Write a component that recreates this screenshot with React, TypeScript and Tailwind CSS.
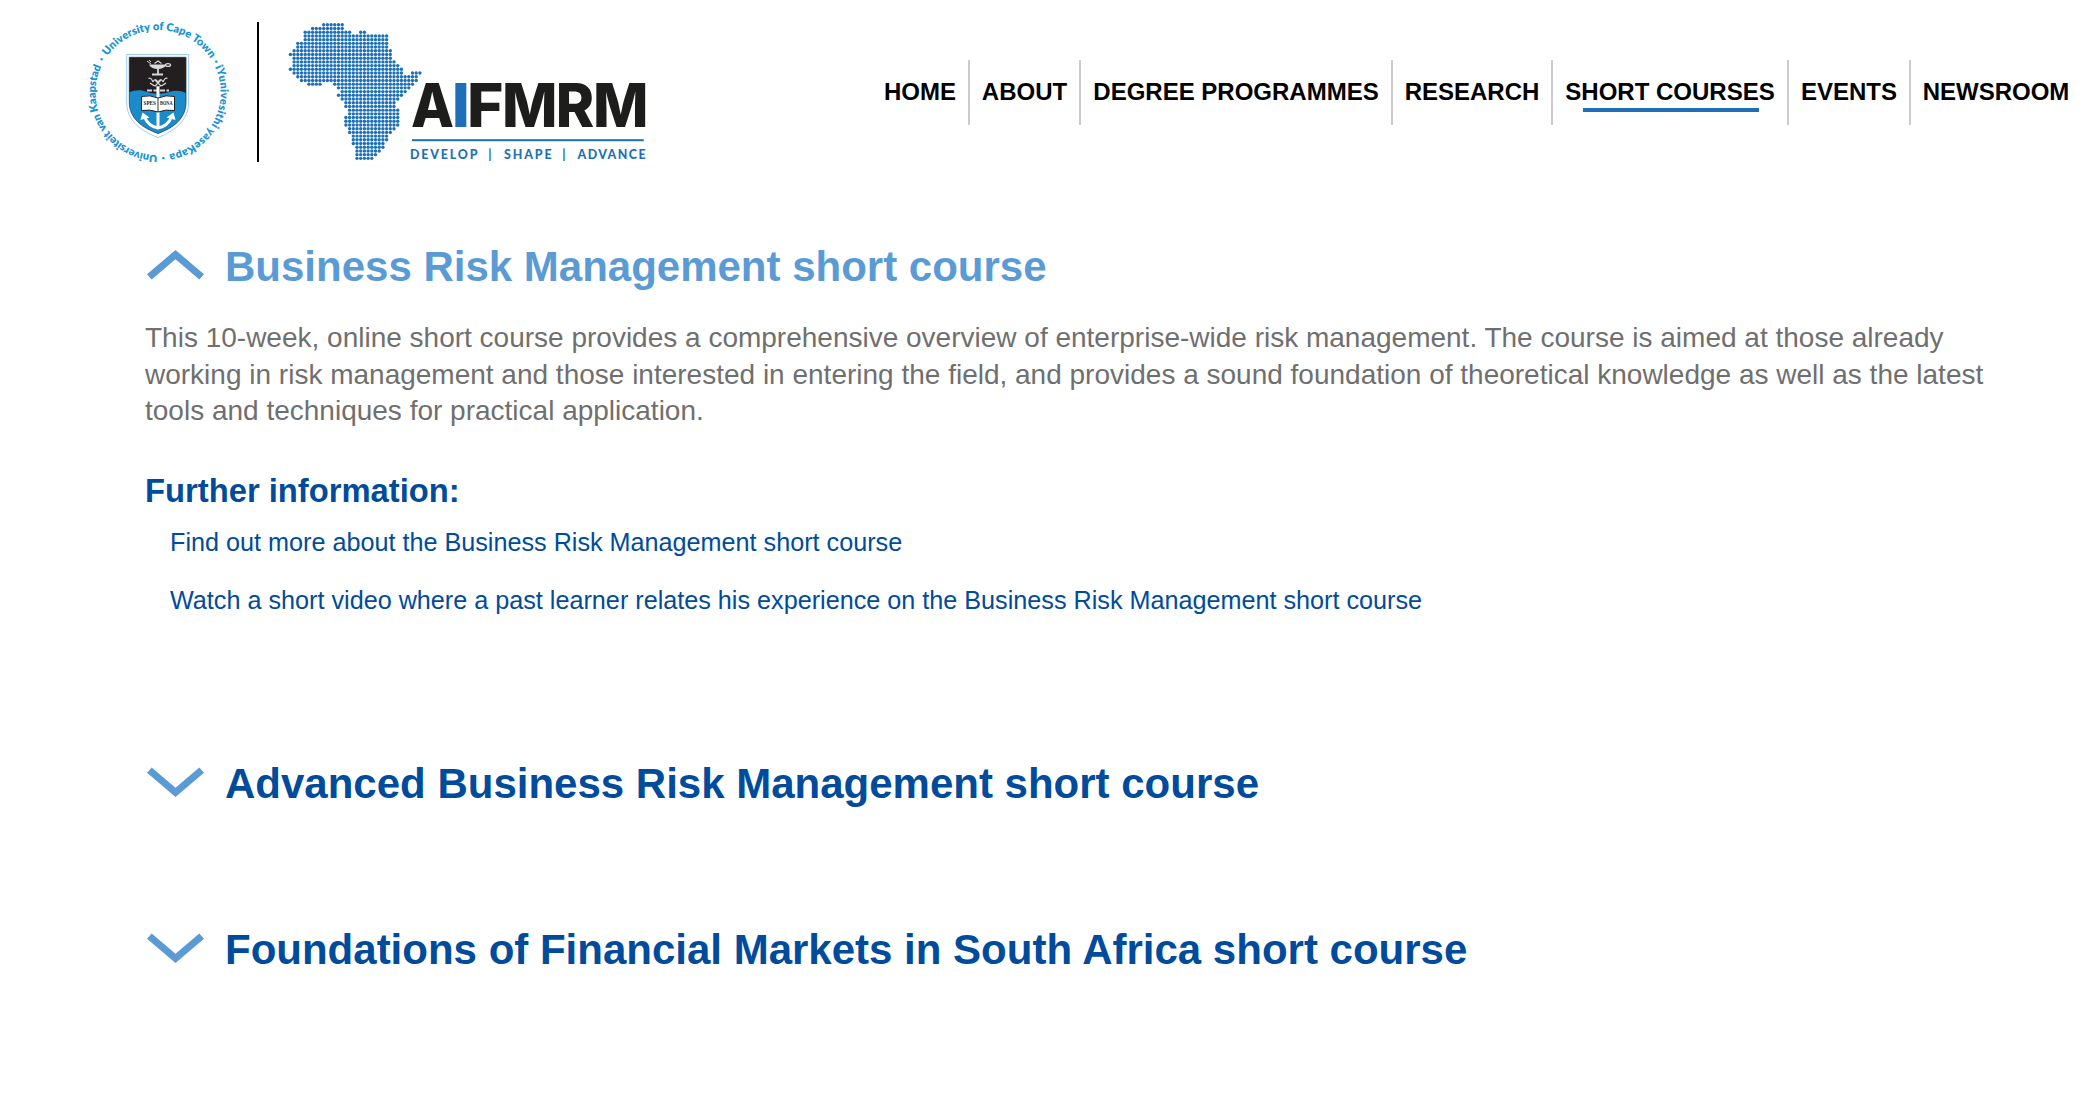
const AFRICA_ROWS: number[][][] = [
  [[9, 14]], [[6, 14]], [[4, 16], [19, 20]], [[4, 26]], [[4, 26]], [[2, 26]], [[2, 26]], [[1, 27]], [[0, 27]],
  [[1, 27]], [[1, 28]], [[1, 29]], [[0, 30]], [[1, 30], [33, 35]], [[2, 34]], [[3, 34]], [[5, 8], [12, 33]],
  [[13, 32]], [[14, 31]], [[13, 30]], [[14, 29]], [[15, 28]], [[15, 28]], [[16, 29]], [[16, 29]], [[15, 29]],
  [[15, 29]], [[15, 29]], [[16, 28]], [[16, 27]], [[17, 26]], [[17, 26]], [[17, 25]], [[18, 25]], [[18, 24]],
  [[18, 23]], [[18, 22]],
];

const RING_NAMES = [
  { text: "University of Cape Town", offset: 0, length: 121 },
  { text: "iYunivesithi yaseKapa", offset: 130.5, length: 113.5 },
  { text: "Universiteit van Kaapstad", offset: 255.5, length: 124.5 },
];

const RING_DOTS = [124.8, 248.4, 384.6];

function CrestLogo() {
  return (
    <svg className="block h-[140px] w-[144px] shrink-0" viewBox="86 22 144 140">
      <defs>
        <path id="ring" d="M107.5 55.9 A62.5 62.5 0 0 1 208.7 129.3 A62.5 62.5 0 0 1 107.5 55.9 A62.5 62.5 0 0 1 208.7 129.3" />
        <clipPath id="field">
          <path d="M129.3 57.3 H186 V102 C186 119 173 128 158 133.5 C143 128 129.3 119 129.3 102 Z" />
        </clipPath>
      </defs>
      <g fill="#1b93d3" fontFamily="Lato, sans-serif" fontWeight="800" fontSize="11">
        {RING_NAMES.map((name) => (
          <text key={name.text} textLength={name.length} lengthAdjust="spacing">
            <textPath href="#ring" startOffset={name.offset} textLength={name.length} lengthAdjust="spacing">
              {name.text}
            </textPath>
          </text>
        ))}
        {RING_DOTS.map((offset) => (
          <text key={offset}>
            <textPath href="#ring" startOffset={offset}>·</textPath>
          </text>
        ))}
      </g>
      <path d="M126.7 54.5 H188.7 V102 C188.7 121 174 131 158 137.5 C141 131 126.7 121 126.7 102 Z" fill="#fff" stroke="#9fcdec" strokeWidth="1" />
      <g clipPath="url(#field)">
        <rect x="128" y="56" width="60" height="80" fill="#1b8ccb" />
        <path d="M128 56 H188 V94 C181 90 175 90 169 92 C163 94 153 94 147 92 C140 89 134 90 128 93 Z" fill="#231f20" />
      </g>
      <path d="M129.3 57.3 H186 V102 C186 119 173 128 158 133.5 C143 128 129.3 119 129.3 102 Z" fill="none" stroke="#1d4257" strokeWidth=".8" />
      <g fill="none" stroke="#d8d8d8" strokeWidth="1.2">
        <path d="M150 65 Q152 68.5 158 68.5 Q164 68 165.5 65 Z" fill="#ddd" />
        <path d="M154.5 63.5 L158 61 L161.5 63.5" />
        <ellipse cx="168" cy="65" rx="2.6" ry="1.4" />
        <path d="M147 61 L151 64 M149 60 L151 62" strokeWidth="1" />
        <path d="M158 69 V74 M152 74.5 H163" strokeWidth="1.8" />
        <path d="M148.5 78.5 Q151 77 153 82 M167.5 78.5 Q165 77 163 82 M150 83 Q158 90 166 83 M153 82 Q155 77 158 82 Q161 77 163 82 M155 80 L161 86 M161 80 L155 86" />
        <path d="M147 90.5 H169" strokeWidth="2" strokeDasharray="5 1.5" />
      </g>
      <g fill="none" stroke="#fff" strokeWidth="3">
        <path d="M158 87 V128" />
        <path d="M144.5 117 Q148.5 126.5 158 128 Q167.5 126.5 171.5 117" />
      </g>
      <path d="M140.5 120 L142.5 112.5 L149.5 117.5 Z M175.5 120 L173.5 112.5 L166.5 117.5 Z" fill="#fff" />
      <path d="M141.5 96.5 Q150 94.5 158 98 Q166 94.5 174.5 96.5 V110.5 Q166 109 158 112 Q150 109 141.5 110.5 Z" fill="#fff" stroke="#231f20" strokeWidth="1" />
      <path d="M158 98 V112" stroke="#231f20" strokeWidth=".9" />
      <g fill="#231f20" fontFamily="Liberation Serif, serif" fontWeight="700" fontSize="5.5">
        <text x="143.5" y="104.6" textLength="12.5" lengthAdjust="spacingAndGlyphs">SPES</text>
        <text x="160" y="104.6" textLength="12.5" lengthAdjust="spacingAndGlyphs">BONA</text>
      </g>
    </svg>
  );
}

const WORDMARK = [
  ["A", 432.4, 43], ["I", 460.8, 18.2], ["F", 485.2, 36.5], ["M", 529.8, 55.5], ["R", 575, 38.5], ["M", 620.8, 55.5],
] as const;

function InstituteLogo() {
  return (
    <svg className="block h-[140px] w-[360px] shrink-0" viewBox="288 22 360 140">
      <g fill="#1d70b7">
        {AFRICA_ROWS.flatMap((spans, row) =>
          spans.flatMap(([from, to]) =>
            Array.from({ length: to - from + 1 }, (_, i) => (
              <circle key={`${row}-${from + i}`} cx={290.4 + (from + i) * 3.7} cy={24.8 + row * 3.71} r="1.7" />
            )),
          ),
        )}
      </g>
      <g fontFamily="Inter, sans-serif" fontWeight="800" fontSize="60.5" textAnchor="middle">
        {WORDMARK.map(([letter, x, advance], i) => (
          <text key={i} x={x} y="127" textLength={advance} lengthAdjust="spacingAndGlyphs" fill={letter === "I" ? "#1d70b7" : "#1d1d1b"}>
            {letter}
          </text>
        ))}
      </g>
      <rect x="412" y="139.2" width="231.7" height="2" fill="#1d70b7" />
      <g fill="#1d70b7" fontFamily="Lato, sans-serif" fontWeight="900" fontSize="12.4">
        <text x="410" y="159.3" textLength="67.5" lengthAdjust="spacing">DEVELOP</text>
        <text x="488.2" y="159.3">|</text>
        <text x="504" y="159.3" textLength="47.5" lengthAdjust="spacing">SHAPE</text>
        <text x="562.2" y="159.3">|</text>
        <text x="577.5" y="159.3" textLength="68" lengthAdjust="spacing">ADVANCE</text>
      </g>
    </svg>
  );
}

const NAV = [
  { label: "HOME", width: "w-[98px]" },
  { label: "ABOUT", width: "w-[111px]" },
  { label: "DEGREE PROGRAMMES", width: "w-[312px]" },
  { label: "RESEARCH", width: "w-[160px]" },
  { label: "SHORT COURSES", width: "w-[236px]", active: true },
  { label: "EVENTS", width: "w-[122px]" },
  { label: "NEWSROOM", width: "w-[170px]" },
];

function Chevron({ open = false }: { open?: boolean }) {
  return (
    <svg className={open ? "mt-[7px] h-[30px] w-[57px] shrink-0" : "mt-[7px] h-[30px] w-[57px] shrink-0 rotate-180"} viewBox="0 0 57 30">
      <path d="M28.5 0 L57 24.2 L52.3 29.5 L28.5 9.2 L4.7 29.5 L0 24.2 Z" fill="#5b9bd5" />
    </svg>
  );
}

function CourseHeading({ title, open = false }: { title: string; open?: boolean }) {
  return (
    <h2 className={`flex h-12 items-start gap-[21.5px] pl-[146.5px] text-[42px] leading-12 font-bold whitespace-nowrap ${open ? "text-[#5b9bd5]" : "text-[#004b9b]"}`}>
      <Chevron open={open} />
      <span>{title}</span>
    </h2>
  );
}

export default function App() {
  return (
    <div className="h-[1104px] w-[2100px] overflow-hidden bg-white font-['Liberation_Sans',Arial,sans-serif]">
      <header className="flex h-[243px] items-start pt-[22px] pl-[86px]">
        <CrestLogo />
        <div className="ml-[27px] h-[140px] w-[2px] shrink-0 bg-black" />
        <div className="ml-[29px]">
          <InstituteLogo />
        </div>
        <nav className="mt-[38px] ml-[224px] flex h-[65px] text-2xl leading-[64px] font-bold whitespace-nowrap text-black">
          {NAV.map((item, i) => (
            <a
              key={item.label}
              className={`relative flex shrink-0 justify-center ${item.width} ${i < NAV.length - 1 ? "border-r-2 border-[#cccccc]" : ""}`}
            >
              {item.label}
              {item.active && <span className="absolute top-12 left-[30px] h-1 w-[176px] bg-[#1f6fb8]" />}
            </a>
          ))}
        </nav>
      </header>
      <main>
        <CourseHeading title="Business Risk Management short course" open />
        <p className="mt-[29px] ml-[145px] text-[28px] leading-[36.6px] whitespace-nowrap text-[#706f6f]">
          This 10-week, online short course provides a comprehensive overview of enterprise-wide risk management. The course is aimed at those already
          <br />
          working in risk management and those interested in entering the field, and provides a sound foundation of theoretical knowledge as well as the latest
          <br />
          tools and techniques for practical application.
        </p>
        <h3 className="mt-[41px] ml-[145px] text-[32.75px] leading-10 font-bold text-[#004b9b]">Further information:</h3>
        <ul className="mt-[15px] ml-[170px] flex flex-col gap-[26px] text-[25.2px] leading-8 text-[#004b9b]">
          <li>Find out more about the Business Risk Management short course</li>
          <li>Watch a short video where a past learner relates his experience on the Business Risk Management short course</li>
        </ul>
        <div className="mt-[144px] flex flex-col gap-[118px]">
          <CourseHeading title="Advanced Business Risk Management short course" />
          <CourseHeading title="Foundations of Financial Markets in South Africa short course" />
        </div>
      </main>
    </div>
  );
}
